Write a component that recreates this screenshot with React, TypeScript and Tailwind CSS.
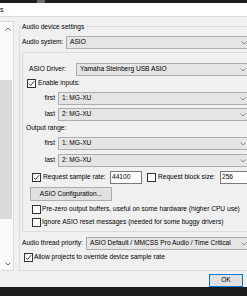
import clsx from "clsx";

function Chevron({ up, color = "#606060" }: { up?: boolean; color?: string }) {
  return (
    <svg width="6" height="4" viewBox="0 0 6 4" className="block shrink-0">
      <polyline
        points={up ? "0.5,3.5 3,1 5.5,3.5" : "0.5,0.5 3,3 5.5,0.5"}
        fill="none"
        stroke={color}
        strokeWidth="1"
      />
    </svg>
  );
}

function Combo({ text, className }: { text: string; className?: string }) {
  return (
    <div
      className={clsx(
        "flex h-[13px] flex-1 items-center justify-between border border-[#adadad] bg-[#e5e5e5] pl-[3px] pr-[3px]",
        className
      )}
    >
      <span className="whitespace-nowrap leading-none">{text}</span>
      <Chevron color="#8a8a8a" />
    </div>
  );
}

function Checkbox({ checked }: { checked?: boolean }) {
  return (
    <span className="flex h-[9px] w-[9px] shrink-0 items-center justify-center border border-[#333] bg-white">
      {checked && (
        <svg width="7" height="7" viewBox="0 0 7 7" className="block">
          <polyline points="0.8,3.6 2.6,5.4 6.2,1.2" fill="none" stroke="#222" strokeWidth="0.9" />
        </svg>
      )}
    </span>
  );
}

function CheckRow({ label, checked, className }: { label: string; checked?: boolean; className?: string }) {
  return (
    <div className={clsx("flex h-[9px] items-center", className)}>
      <Checkbox checked={checked} />
      <span className="ml-[1px] whitespace-nowrap leading-none">{label}</span>
    </div>
  );
}

function RangeRow({ label, value, className }: { label: string; value: string; className?: string }) {
  return (
    <div className={clsx("flex h-[13px] items-center", className)}>
      <span className="mr-[3px] w-[32px] text-right leading-none">{label}</span>
      <Combo text={value} />
    </div>
  );
}

export default function App() {
  return (
    <div className="flex h-[296px] w-[247px] flex-col overflow-hidden bg-[#f0f0f0] font-['Liberation_Sans',Arial,sans-serif] text-[6.6px] text-black">
      {/* window chrome */}
      <div className="flex h-[3px] shrink-0 bg-[#1f1f1f]">
        <div className="ml-[37px] w-[8px] bg-[#6b6b6b]" />
      </div>
      <div className="flex h-[14px] shrink-0 items-center border-b border-[#dadada] bg-white text-[7px] leading-none">
        s
      </div>

      <div className="flex h-[254px] shrink-0 items-start">
        {/* list scrollbar */}
        <div className="mt-[4px] flex h-[250px] w-[14px] shrink-0 flex-col border-y border-r border-[#dcdcdc] bg-[#fafafa]">
          <div className="flex h-[13px] items-center justify-end pr-[2px]">
            <Chevron up />
          </div>
          <div className="mt-[45px] h-[139px] w-[12px] bg-[#dadada]" />
          <div className="mt-auto flex h-[12px] items-center justify-end pr-[2px]">
            <Chevron />
          </div>
        </div>

        {/* audio device settings group */}
        <div className="ml-[5px] mt-[9px] flex h-[245px] w-[233px] shrink-0 flex-col border border-[#dcdcdc]">
          <div className="-mt-[5px] ml-[2px] h-[9px] w-fit bg-[#f0f0f0] pr-[2px] leading-[9px]">
            Audio device settings
          </div>

          <div className="mt-[5px] flex h-[13px] items-center">
            <span className="ml-[2px] w-[44px] leading-none">Audio system:</span>
            <Combo text="ASIO" />
          </div>

          <div className="ml-[2px] mt-[3px] flex h-[180px] flex-col border border-[#dcdcdc]">
            <div className="mt-[10px] flex h-[13px] items-center">
              <span className="ml-[6px] w-[47px] leading-none">ASIO Driver:</span>
              <Combo text="Yamaha Steinberg USB ASIO" />
            </div>

            <CheckRow checked label="Enable inputs:" className="ml-[4px] mt-[3px] [&>span:last-child]:ml-[2px]" />
            <RangeRow label="first" value="1: MG-XU" className="mt-[4px]" />
            <RangeRow label="last" value="2: MG-XU" className="mt-[3px]" />

            <div className="ml-[3px] mt-[3px] flex h-[9px] items-center leading-none">Output range:</div>
            <RangeRow label="first" value="1: MG-XU" className="mt-[4px]" />
            <RangeRow label="last" value="2: MG-XU" className="mt-[4px]" />

            <div className="mt-[4px] flex h-[13px] items-center">
              <span className="ml-[9px]">
                <Checkbox checked />
              </span>
              <span className="ml-[2px] w-[67px] whitespace-nowrap leading-none">Request sample rate:</span>
              <div className="flex h-[13px] w-[32px] items-center border border-[#7a7a7a] bg-white pl-[1px] leading-none">
                44100
              </div>
              <span className="ml-[5px]">
                <Checkbox />
              </span>
              <span className="ml-[2px] w-[62px] whitespace-nowrap leading-none">Request block size:</span>
              <div className="flex h-[13px] flex-1 items-center border border-[#7a7a7a] bg-white pl-[1px] leading-none">
                256
              </div>
            </div>

            <button className="ml-[7px] mt-[3px] flex h-[14px] w-[82px] items-center justify-center border border-[#adadad] bg-[#e1e1e1] leading-none">
              ASIO Configuration...
            </button>

            <CheckRow
              label="Pre-zero output buffers, useful on some hardware (higher CPU use)"
              className="ml-[9px] mt-[4px]"
            />
            <CheckRow
              label="Ignore ASIO reset messages (needed for some buggy drivers)"
              className="ml-[9px] mt-[4px]"
            />
          </div>

          <div className="mt-[5px] flex h-[13px] items-center">
            <span className="ml-[2px] w-[64px] whitespace-nowrap leading-none">Audio thread priority:</span>
            <Combo text="ASIO Default / MMCSS Pro Audio / Time Critical" />
          </div>

          <CheckRow checked label="Allow projects to override device sample rate" className="ml-[4px] mt-[3px]" />
        </div>
      </div>

      {/* dialog buttons */}
      <div className="flex h-[16px] shrink-0 items-start justify-end pr-[4px] pt-[3px]">
        <button className="flex h-[13px] w-[34px] items-center justify-center border border-[#0078d7] bg-[#e1e1e1] leading-none">
          OK
        </button>
      </div>
      <div className="h-[9px] shrink-0 bg-[#1c1c1c]" />
    </div>
  );
}
